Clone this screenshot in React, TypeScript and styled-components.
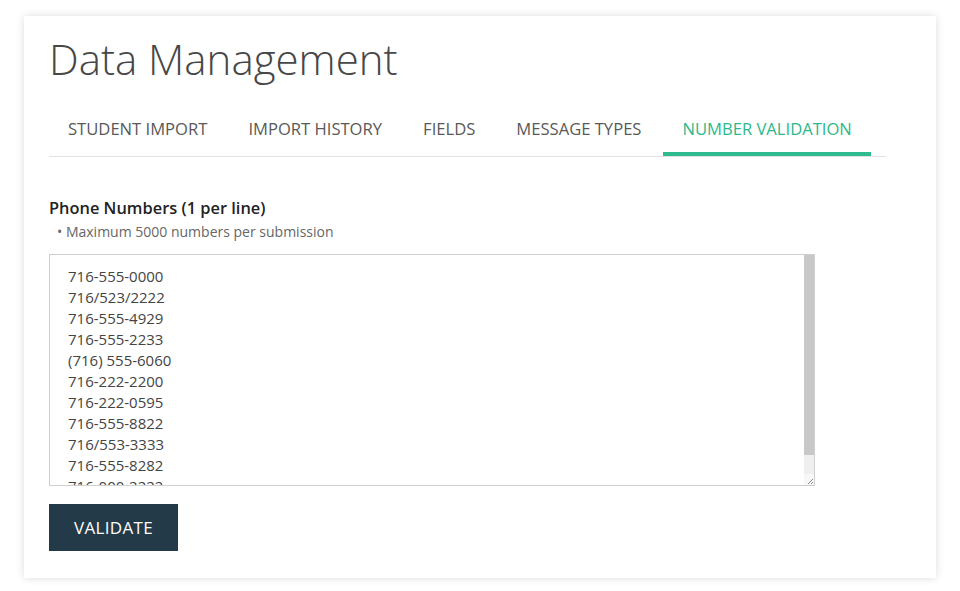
import React, { useState } from "react";
import styled, { createGlobalStyle } from "styled-components";

const GlobalStyle = createGlobalStyle`
  body {
    margin: 0;
    background: #ffffff;
    font-family: "Open Sans", "Liberation Sans", sans-serif;
    color: #444444;
  }
`;

const Card = styled.div`
  width: 912px;
  margin: 16px 24px;
  box-sizing: border-box;
  padding: 18px 50px 27px 25px;
  background: #ffffff;
  box-shadow: 0 0 8px rgba(0, 0, 0, 0.14);
`;

const Title = styled.h1`
  margin: 0;
  font-size: 42px;
  line-height: 50px;
  font-weight: 300;
  color: #474747;
`;

const TabList = styled.div`
  display: flex;
  gap: 3px;
  margin-top: 20px;
  border-bottom: 1px solid #e2e2e2;
`;

const Tab = styled.button<{ $active?: boolean }>`
  border: none;
  background: none;
  padding: 14px 19px 12px;
  font-family: "Open Sans", "Liberation Sans", sans-serif;
  font-size: 16.6px;
  line-height: 22px;
  text-transform: uppercase;
  cursor: pointer;
  color: ${(p) => (p.$active ? "#2cb88c" : "#595959")};
  border-bottom: 4px solid ${(p) => (p.$active ? "#2fbb8f" : "transparent")};
`;

const Label = styled.div`
  margin-top: 40px;
  font-size: 16.4px;
  line-height: 22px;
  font-weight: 600;
  color: #222222;
`;

const Hint = styled.div`
  margin-top: 4px;
  padding-left: 8px;
  font-size: 14px;
  line-height: 18px;
  color: #666666;
`;

const BoxWrap = styled.div`
  position: relative;
  margin-top: 13px;
  width: 766px;
  height: 232px;
`;

const NumbersBox = styled.textarea`
  display: block;
  width: 100%;
  height: 100%;
  box-sizing: border-box;
  padding: 11px 24px 12px 18px;
  border: 1px solid #cfcfcf;
  font-family: "Open Sans", "Liberation Sans", sans-serif;
  font-size: 15px;
  line-height: 21px;
  color: #444444;
  resize: none;
  outline: none;
  overflow: hidden;
`;

const ScrollTrack = styled.div`
  position: absolute;
  top: 1px;
  right: 1px;
  bottom: 1px;
  width: 10px;
  display: flex;
  flex-direction: column;
  background: #efefef;
  pointer-events: none;
`;

const ScrollThumb = styled.div`
  height: 200px;
  background: #c8c8c8;
`;

const ResizeCorner = styled.div`
  margin-top: auto;
  height: 11px;
  background: #f7f7f7;
  display: flex;
  align-items: flex-end;
  justify-content: flex-end;
`;

const ValidateButton = styled.button`
  display: block;
  margin-top: 18px;
  width: 129px;
  height: 47px;
  border: none;
  background: #233a48;
  color: #ffffff;
  font-family: "Open Sans", "Liberation Sans", sans-serif;
  font-size: 17px;
  font-weight: 400;
  letter-spacing: 0.3px;
  cursor: pointer;
`;

const tabs = [
  "Student Import",
  "Import History",
  "Fields",
  "Message Types",
  "Number Validation",
];

const sampleNumbers = [
  "716-555-0000",
  "716/523/2222",
  "716-555-4929",
  "716-555-2233",
  "(716) 555-6060",
  "716-222-2200",
  "716-222-0595",
  "716-555-8822",
  "716/553-3333",
  "716-555-8282",
  "716-000-2222",
].join("\n");

const App: React.FC = () => {
  const [active, setActive] = useState(4);
  const [numbers, setNumbers] = useState(sampleNumbers);

  return (
    <>
      <GlobalStyle />
      <Card>
        <Title>Data Management</Title>
        <TabList>
          {tabs.map((t, idx) => (
            <Tab key={t} $active={idx === active} onClick={() => setActive(idx)}>
              {t}
            </Tab>
          ))}
        </TabList>
        <Label>Phone Numbers (1 per line)</Label>
        <Hint>• Maximum 5000 numbers per submission</Hint>
        <BoxWrap>
          <NumbersBox
            value={numbers}
            onChange={(e) => setNumbers(e.target.value)}
            spellCheck={false}
          />
          <ScrollTrack>
            <ScrollThumb />
            <ResizeCorner>
              <svg width="8" height="8" viewBox="0 0 8 8">
                <path d="M7 2 L2 7 M7 5 L5 7" stroke="#8a8a8a" strokeWidth="1" />
              </svg>
            </ResizeCorner>
          </ScrollTrack>
        </BoxWrap>
        <ValidateButton>VALIDATE</ValidateButton>
      </Card>
    </>
  );
};

export default App;
